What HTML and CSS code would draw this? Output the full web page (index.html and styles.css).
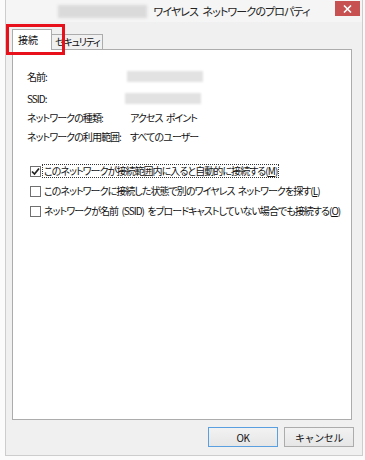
FILE: index.html
```html
<!DOCTYPE html>
<html lang="ja">
<head>
    <meta charset="UTF-8">
    <title>ワイヤレス ネットワークのプロパティ</title>
    <link rel="stylesheet" href="styles.css">
</head>
<body>
    <div class="window">
        <div class="titlebar">
            <span></span>
            <div class="caption">
                <span class="blur-name"></span>
                <span class="title">ワイヤレス ネットワークのプロパティ</span>
            </div>
            <div class="close">
                <svg width="9" height="8" viewBox="0 0 9 8">
                    <path d="M1 0.5 L8 7.5 M8 0.5 L1 7.5" stroke="#fff" stroke-width="1.6"/>
                </svg>
            </div>
        </div>

        <div class="tabs">
            <div class="tab active">接続</div>
            <div class="tab">セキュリティ</div>
        </div>

        <div class="panel">
            <div class="info">
                <div class="row first">
                    <span class="label">名前:</span>
                    <span class="blurred w1"></span>
                </div>
                <div class="row">
                    <span class="label">SSID:</span>
                    <span class="blurred w2"></span>
                </div>
                <div class="row">
                    <span class="label">ネットワークの種類:</span>
                    <span class="value">アクセス ポイント</span>
                </div>
                <div class="row">
                    <span class="label">ネットワークの利用範囲:</span>
                    <span class="value">すべてのユーザー</span>
                </div>
            </div>

            <div class="options">
                <label class="option">
                    <span class="box checked">
                        <svg width="9" height="9" viewBox="0 0 9 9">
                            <path d="M1 4.5 L3.5 7 L8 1.5" fill="none" stroke="#222" stroke-width="1.7"/>
                        </svg>
                    </span>
                    <span class="text focused">このネットワークが接続範囲内に入ると自動的に接続する(<u>M</u>)</span>
                </label>
                <label class="option">
                    <span class="box"></span>
                    <span class="text">このネットワークに接続した状態で別のワイヤレス ネットワークを探す(<u>L</u>)</span>
                </label>
                <label class="option">
                    <span class="box"></span>
                    <span class="text">ネットワークが名前 (SSID) をブロードキャストしていない場合でも接続する(<u>O</u>)</span>
                </label>
            </div>
        </div>

        <div class="buttons">
            <button class="btn default">OK</button>
            <button class="btn">キャンセル</button>
        </div>

        <div class="highlight"></div>
    </div>
</body>
</html>
```

FILE: styles.css
```css
body {
    margin: 0;
    background-color: #fbfbfb;
    font-family: "Noto Sans CJK JP", "Noto Sans", sans-serif;
    font-size: 10px;
    letter-spacing: -0.95px;
    word-spacing: 2px;
    color: #111;
    font-feature-settings: "palt";
}
.window {
    position: relative;
    margin-left: 5px;
    width: 356px;
    height: 455px;
    border: 1px solid #cdcdcd;
    border-top: none;
    background-color: #f0f0f0;
    white-space: nowrap;
}
.titlebar {
    height: 22px;
    display: grid;
    grid-template-columns: 1fr auto 1fr;
    background-color: #f5f5f5;
}
.caption {
    display: flex;
    align-items: center;
    gap: 6px;
}
.blur-name {
    width: 89px;
    height: 13px;
    margin-top: 1px;
    background-color: #dadada;
    filter: blur(1.5px);
}
.title {
    font-size: 11px;
    letter-spacing: -0.9px;
    word-spacing: 3px;
    color: #222;
    padding-bottom: 1px;
}
.close {
    justify-self: end;
    margin: 1px 2px 0 0;
    width: 25px;
    height: 15px;
    background-color: #c75050;
    display: flex;
    align-items: center;
    justify-content: center;
}
.tabs {
    height: 27px;
    padding-left: 6px;
    display: flex;
    align-items: flex-end;
}
.tab {
    height: 14px;
    padding: 0 2px 0 3px;
    line-height: 14px;
    letter-spacing: -1.2px;
    border: 1px solid #acacac;
    border-bottom: none;
    border-left: none;
    background-color: #f0f0f0;
}
.tab.active {
    position: relative;
    z-index: 1;
    height: 20px;
    width: 33px;
    margin-bottom: -1px;
    padding: 0 0 0 5px;
    line-height: 20px;
    letter-spacing: 0;
    border-left: 1px solid #acacac;
    background-color: #fff;
}
.panel {
    height: 369px;
    margin: 0 10px 0 6px;
    border: 1px solid #acacac;
    background-color: #fff;
}
.info {
    padding: 17px 0 0 14px;
}
.row {
    display: grid;
    grid-template-columns: 103px auto;
    align-items: center;
    height: 19px;
}
.row.first {
    margin-bottom: 3px;
}
.blurred {
    height: 11px;
    background-color: #e2e2e2;
    filter: blur(1px);
}
.w1 {
    width: 76px;
    margin-left: -3px;
}
.w2 {
    width: 76px;
    margin-left: -5px;
}
.options {
    padding: 15px 0 0 17px;
}
.option {
    display: flex;
    align-items: center;
    height: 20px;
}
.box {
    width: 9px;
    height: 9px;
    border: 1px solid #707070;
    background-color: #fff;
    display: flex;
    align-items: center;
    justify-content: center;
}
.text {
    margin-left: 1px;
    padding: 0 1px;
    line-height: 12px;
    border: 1px dotted transparent;
}
.text.focused {
    border-color: #333;
}
.buttons {
    display: flex;
    justify-content: flex-end;
    gap: 6px;
    padding: 7px 8px 0 0;
}
.btn {
    width: 70px;
    height: 20px;
    padding: 0;
    font-family: inherit;
    font-size: 10px;
    letter-spacing: -0.4px;
    color: #111;
    border: 1px solid #acacac;
    background: linear-gradient(#f2f2f2, #e6e6e6);
}
.btn.default {
    border-color: #5a9fe0;
}
.highlight {
    position: absolute;
    left: 0;
    top: 24px;
    width: 53px;
    height: 25px;
    border: 3px solid #e8101a;
    z-index: 2;
}
```
